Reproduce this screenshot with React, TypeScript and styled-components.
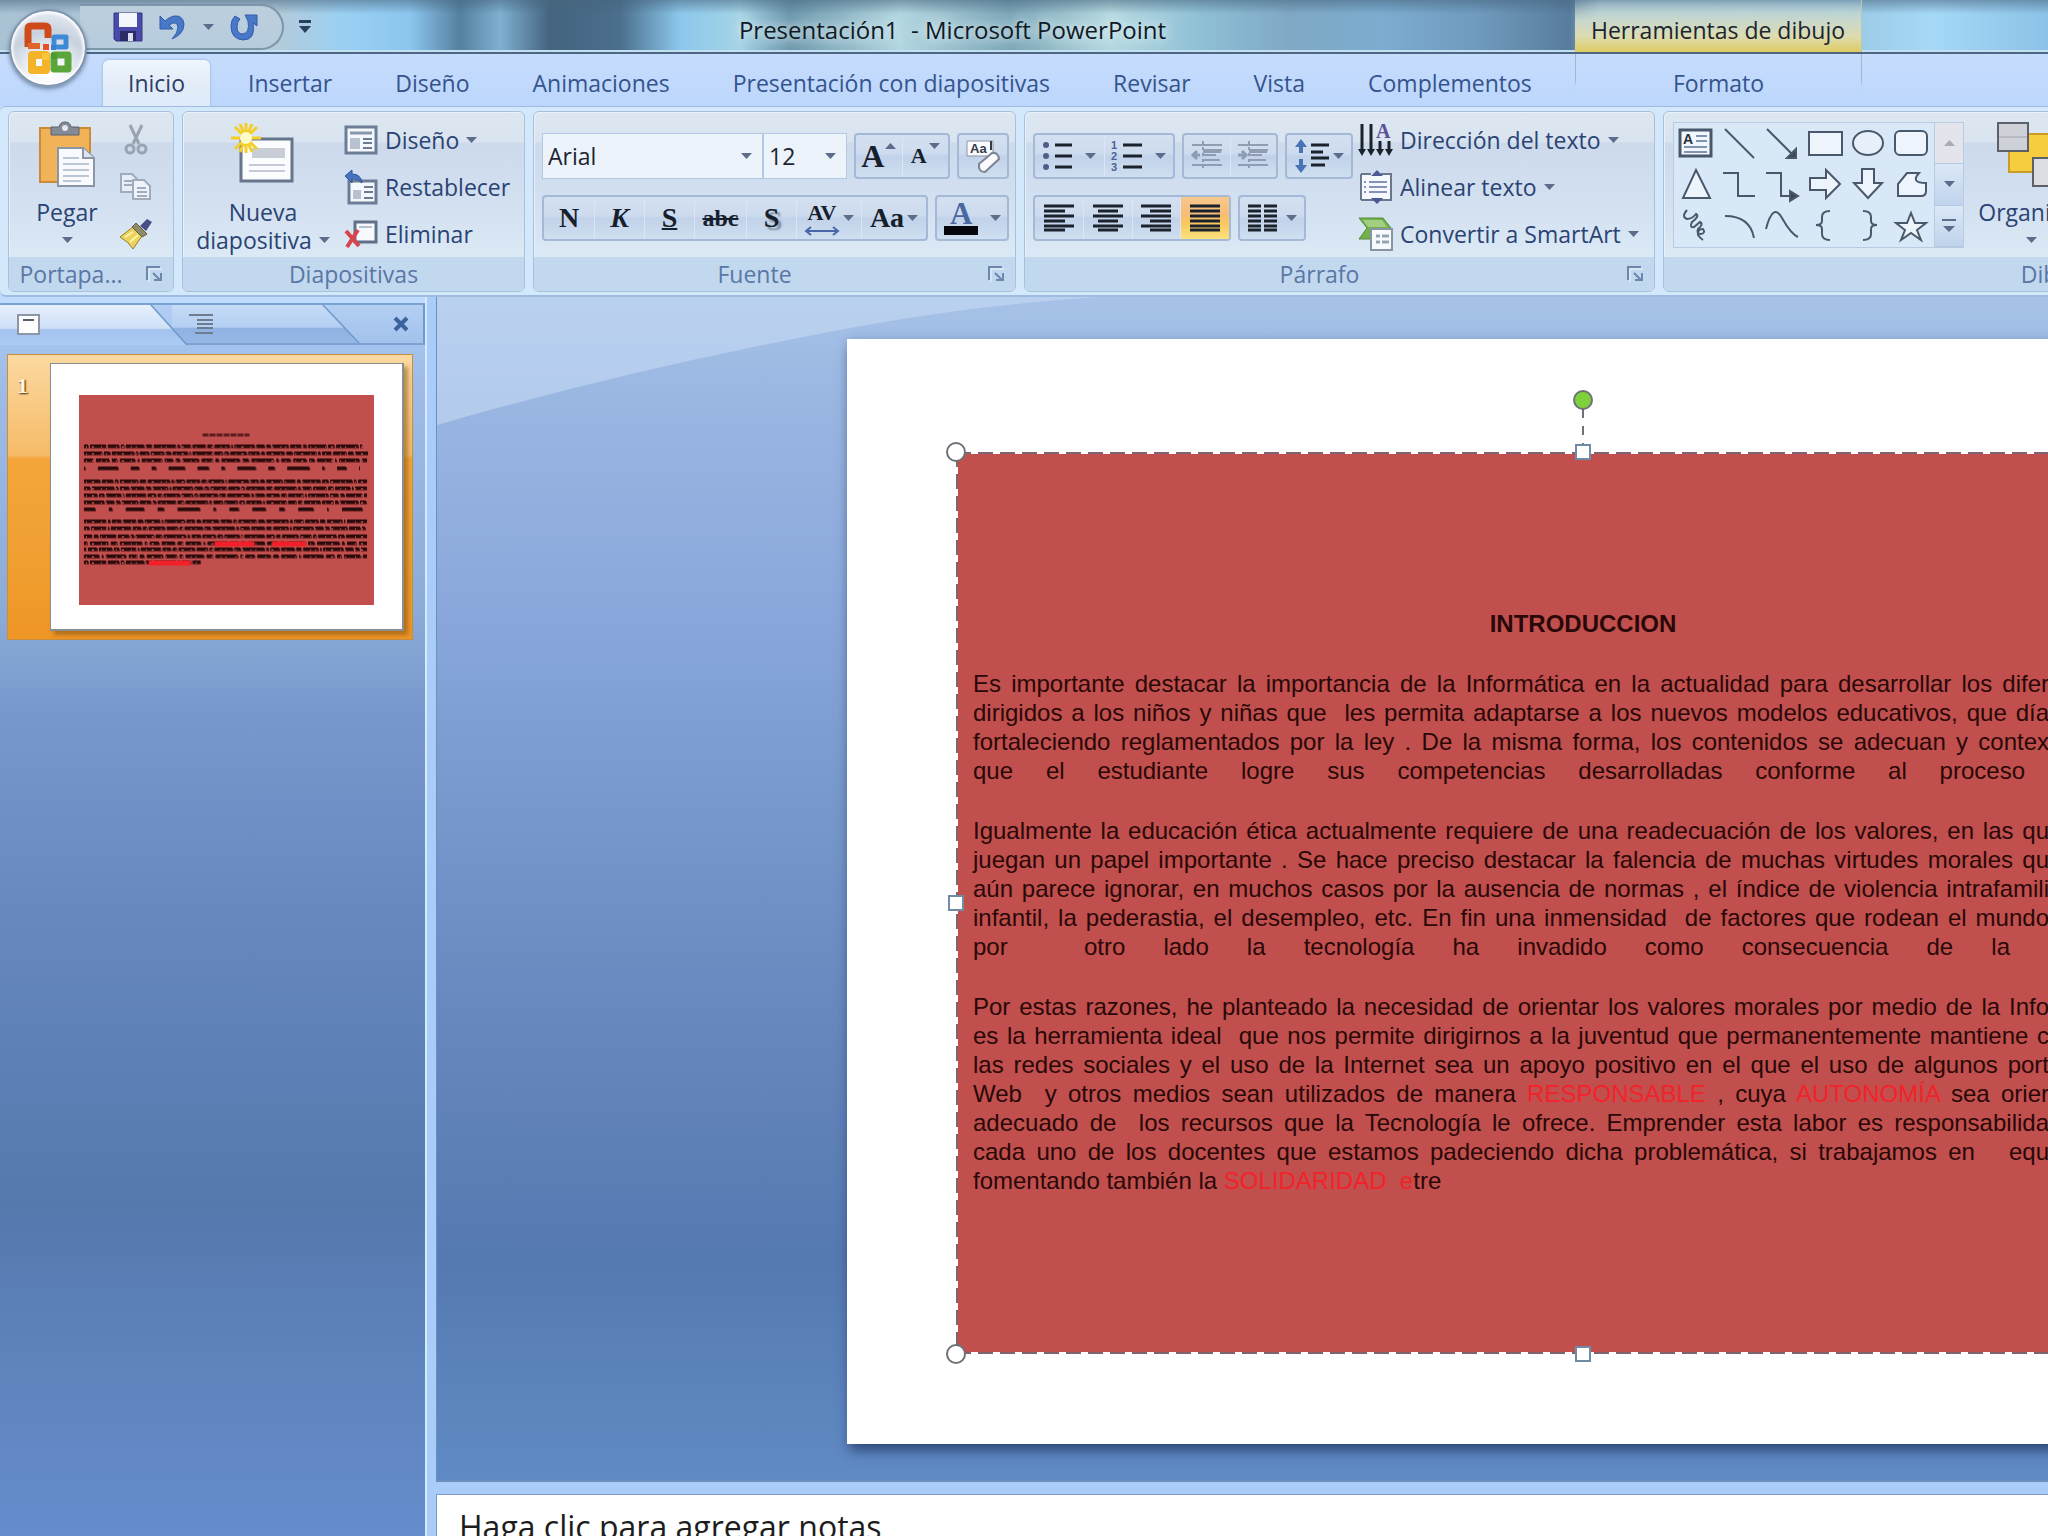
import React from 'react';
import styled, { createGlobalStyle, css } from 'styled-components';

const ui = `"Open Sans", "Noto Sans", sans-serif`;
const arial = `"Liberation Sans", Arial, sans-serif`;
const serif = `"Liberation Serif", "Times New Roman", serif`;

const GlobalStyle = createGlobalStyle`
  *, *::before, *::after { box-sizing: border-box; }
  html, body { margin: 0; height: 100%; overflow: hidden; }
  #root { height: 100%; }
  button, select, textarea { font: inherit; color: inherit; margin: 0; padding: 0; border: 0; background: none; }
  svg { display: block; flex: none; overflow: visible; }
`;

const Window = styled.div`
  position: relative;
  display: flex;
  flex-direction: column;
  height: 100vh;
  overflow: hidden;
  background: #bfdbff;
  font-family: ${ui};
  font-size: 23px;
  line-height: 28px;
  color: #2b4373;
`;

/* ---------- title bar ---------- */

const TitleBar = styled.header`
  display: flex;
  flex: none;
  height: 54px;
  border-bottom: 2px solid #4c6683;
  box-shadow: inset 0 -2px 0 #c3dff2;
  background:
    linear-gradient(180deg, rgba(70, 100, 125, 0.55) 0, rgba(120, 160, 190, 0) 14px),
    linear-gradient(90deg, #a9c3d4 0, #b3cbdb 280px, #9bd0f2 340px, #8cc6ee 410px, #55809f 460px, #7fb0d2 500px,
      #44647f 550px, #4b6f8c 620px, #8cc8ec 680px, #a4d3e6 740px, #6c97ac 790px, #b3d7e1 900px, #7ba5b7 1010px,
      #b5d9e0 1110px, #8fc0d6 1200px, #7fa8c4 1290px, #7cacd0 1380px, #6f9abd 1480px, #587c9e 1570px, #a3c8dc 1600px,
      #9ccbe6 1860px, #a6d9f8 1930px, #8cc2e6 100%);
`;

const QuickAccess = styled.div`
  display: flex;
  flex: none;
  align-items: center;
  width: 330px;
  padding: 4px 0 2px 80px;
`;

const QuickPill = styled.div`
  display: flex;
  align-items: center;
  gap: 16px;
  width: 204px;
  height: 46px;
  padding-left: 33px;
  border: 2px solid #7e95ab;
  border-left: 0;
  border-radius: 0 24px 24px 0;
  background: linear-gradient(#bdcfdd, #b6ccdd);
`;

const IconButton = styled.button<{ $w?: number; $h?: number }>`
  display: flex;
  align-items: center;
  justify-content: center;
  width: ${(p) => (p.$w ? `${p.$w}px` : 'auto')};
  height: ${(p) => (p.$h ? `${p.$h}px` : 'auto')};
`;

const QuickMenu = styled(IconButton)`
  margin-left: 14px;
`;

const DocTitle = styled.h1`
  flex: 1;
  margin: 0;
  padding-top: 16px;
  text-align: center;
  font-size: 24px;
  font-weight: 400;
  line-height: 28px;
  color: #101a26;
  text-shadow: 0 0 10px #e6f3f6, 0 0 16px #d6ebf2;
`;

const ContextTitle = styled.div`
  flex: none;
  width: 287px;
  margin-right: 186px;
  padding-top: 16px;
  text-align: center;
  color: #1c2430;
  border-right: 1px solid #b9c7b8;
  background: linear-gradient(rgba(190, 215, 225, 0.2) 0, #c9d8cc 40%, #dcdcb0 70%, #dfcb62 100%);
`;

const OfficeButton = styled.button`
  position: absolute;
  left: 9px;
  top: 9px;
  display: flex;
  align-items: center;
  justify-content: center;
  width: 78px;
  height: 78px;
  border: 2px solid #8195ae;
  border-radius: 50%;
  background: radial-gradient(circle at 50% 85%, #ffffff 0, #f3f6fa 25%, #c8d1dd 58%, #e9eef5 90%);
  box-shadow: 0 2px 4px rgba(50, 70, 100, 0.6), inset 0 0 3px 2px #ffffff;
`;

/* ---------- tabs ---------- */

const TabRow = styled.nav`
  display: flex;
  flex: none;
  height: 52px;
  padding-left: 103px;
  background: linear-gradient(#c6dcfc, #bcd7fd);
`;

const Tab = styled.button<{ $active?: boolean }>`
  flex: none;
  height: 46px;
  margin: 6px 13px 0 0;
  padding: 0 25px;
  border-radius: 6px 6px 0 0;
  line-height: 46px;
  color: #35548c;
  white-space: nowrap;
  &:only-child { margin-right: 0; }
  ${(p) =>
    p.$active &&
    css`
      color: #2c3f66;
      background: linear-gradient(#eef5fd, #e3edf8 50%, #dfeafa);
      box-shadow: 0 0 2px 1px #a6c4ea;
    `}
`;

const ContextTabs = styled.div`
  display: flex;
  flex: none;
  justify-content: center;
  width: 287px;
  margin: 0 186px 0 auto;
  border: solid transparent;
  border-width: 0 1px;
  background: linear-gradient(#c6dcfc, #bcd7fd) padding-box, linear-gradient(#9fb6cc 50%, #bcd7fd 60%) border-box;
`;

/* ---------- ribbon ---------- */

const Ribbon = styled.section`
  display: flex;
  flex: none;
  gap: 8px;
  height: 191px;
  padding: 4px 0 3px 8px;
  border: 1px solid #9dbce0;
  border-width: 1px 0 2px;
  border-radius: 6px 0 0 6px;
  background: #d3e8fa;
  overflow: hidden;
`;

const Group = styled.section<{ $w: number }>`
  display: flex;
  flex: none;
  flex-direction: column;
  width: ${(p) => p.$w}px;
  border: 1px solid #a8c0dc;
  border-radius: 6px;
  overflow: hidden;
  background: linear-gradient(#dde7f1 0, #d9e4f0 30px, #ccdaec 31px, #d3e1f1 100px, #dceaf6 146px);
  box-shadow: inset 1px 1px 0 #e9f2fa;
`;

const GroupBody = styled.div<{ $pad?: string; $gap?: number }>`
  display: flex;
  flex: 1;
  min-height: 0;
  gap: ${(p) => p.$gap ?? 0}px;
  padding: ${(p) => p.$pad ?? '0'};
`;

const Caption = styled.footer`
  display: flex;
  flex: none;
  align-items: center;
  height: 34px;
  padding: 0 9px;
  background: #c1d8ef;
  color: #5a77a5;
`;

const CaptionText = styled.span<{ $launcher?: boolean }>`
  flex: 1;
  padding-right: ${(p) => (p.$launcher ? 22 : 0)}px;
  text-align: center;
  white-space: nowrap;
`;

const BigButton = styled.button<{ $w: number }>`
  display: flex;
  flex: none;
  flex-direction: column;
  align-items: center;
  width: ${(p) => p.$w}px;
  height: 138px;
  white-space: nowrap;
`;

const BigIcon = styled.span`
  height: 82px;
  padding-top: 6px;
`;

const BigLabel = styled.span`
  display: flex;
  align-items: center;
  gap: 7px;
  height: 28px;
`;

const Stack = styled.div`
  display: flex;
  flex: none;
  flex-direction: column;
`;

const SmallButton = styled.button`
  display: flex;
  align-items: center;
  gap: 7px;
  height: 47px;
  white-space: nowrap;
`;

const Rows = styled.div`
  display: flex;
  flex: none;
  flex-direction: column;
  gap: 16px;
  padding-top: 21px;
`;

const Row = styled.div<{ $tight?: boolean }>`
  display: flex;
  gap: ${(p) => (p.$tight ? 0 : 7)}px;
  height: 46px;
`;

const ButtonSet = styled.div<{ $w: number }>`
  display: flex;
  flex: none;
  width: ${(p) => p.$w}px;
  border: 2px solid #a3b9d6;
  border-radius: 4px;
  background: linear-gradient(#d3e0f1 0, #cddbee 45%, #c1d2e9 50%, #cfdff1 100%);
`;

const SetButton = styled.button<{ $active?: boolean; $gap?: number; $w?: number }>`
  display: flex;
  flex: ${(p) => (p.$w ? `0 0 ${p.$w}px` : '1 1 0')};
  align-items: center;
  justify-content: center;
  gap: ${(p) => p.$gap ?? 8}px;
  border-left: 1px solid #dbe6f4;
  &:first-child { border-left: 0; }
  ${(p) => p.$active && css`background: linear-gradient(#f8c88c, #f7bd78 40%, #fbc55c 60%, #fde27e);`}
`;

const Glyph = styled.span<{ $italic?: boolean; $line?: string; $shadow?: boolean; $size?: number }>`
  font-family: ${serif};
  font-weight: 700;
  font-size: ${(p) => p.$size ?? 28}px;
  line-height: ${(p) => ((p.$size ?? 28) > 30 ? 38 : (p.$size ?? 28) > 24 ? 32 : 26)}px;
  color: #16202c;
  font-style: ${(p) => (p.$italic ? 'italic' : 'normal')};
  text-decoration: ${(p) => p.$line ?? 'none'};
  text-decoration-thickness: 2px;
  text-shadow: ${(p) => (p.$shadow ? '3px 3px 2px #7a8797' : 'none')};
`;

const Superscript = styled.span`
  align-self: flex-start;
  padding-top: 8px;
`;

const Combo = styled.label<{ $w: number }>`
  display: flex;
  flex: none;
  align-items: center;
  width: ${(p) => p.$w}px;
  padding-right: 10px;
  border: 1px solid #b3c8e2;
  background: #ecf3fb;
`;

const ComboSelect = styled.select`
  flex: 1;
  min-width: 0;
  height: 100%;
  padding-left: 5px;
  appearance: none;
  color: #1c2530;
`;

const Gallery = styled.div`
  display: flex;
  flex: none;
  width: 291px;
  height: 126px;
  margin-top: 6px;
  border: 1px solid #b7cbe2;
  background: #d8e8f7;
`;

const ShapeGrid = styled.div`
  display: grid;
  flex: 1;
  grid-template-columns: repeat(6, 1fr);
  grid-template-rows: repeat(3, 1fr);
`;

const Scroller = styled.div`
  display: grid;
  grid-template-rows: repeat(3, 1fr);
  width: 29px;
  border-left: 1px solid #b7cbe2;
`;

const ScrollButton = styled.button<{ $off?: boolean }>`
  display: flex;
  align-items: center;
  justify-content: center;
  border-bottom: 1px solid #b3c8e2;
  background: ${(p) => (p.$off ? '#e4e4ec' : 'linear-gradient(#dbe8f7, #c0d3ec)')};
`;

/* ---------- work area ---------- */

const backdrop = `linear-gradient(#a6c2e8 0, #9ab7e2 100px, #88a6da 330px, #7799cc 500px, #6788be 720px, #5579b1 960px, #5f89c2 1160px, #648ccc 1240px)`;

const Work = styled.main`
  display: flex;
  flex: 1;
  min-height: 0;
  padding-top: 6px;
`;

const SidePane = styled.aside`
  display: flex;
  flex: none;
  flex-direction: column;
  width: 425px;
  background: linear-gradient(#a9c9f3 0, #9dbbe6 90px, #8cadd8 300px, #7898cd 410px, #6789bf 600px, #5578ad 900px, #5f85bf 1080px, #658dcc 1240px);
`;

const PaneTabs = styled.div`
  display: flex;
  flex: none;
  height: 42px;
  background: linear-gradient(#b3cff3, #a3c2ec);
  border-top: 2px solid #7ca2d3;
  border-right: 2px solid #7397cb;
  border-bottom: 2px solid #7ca2d3;
`;

const PaneTab = styled.button<{ $w: number; $front?: boolean }>`
  position: relative;
  flex: none;
  width: ${(p) => p.$w}px;
  margin-right: ${(p) => (p.$front ? -16 : 0)}px;
  margin-bottom: ${(p) => (p.$front ? -2 : 0)}px;
  padding-left: 17px;
  z-index: ${(p) => (p.$front ? 1 : 0)};
  clip-path: polygon(0 0, calc(100% - 36px) 0, 100% 100%, 0 100%);
  background: #6f97cb;
  &::before {
    content: '';
    position: absolute;
    inset: 0 2px 0 0;
    clip-path: polygon(0 0, calc(100% - 36px) 0, 100% 100%, 0 100%);
    background: ${(p) =>
      p.$front
        ? 'linear-gradient(#e6f0fc, #cfe0f7 58%, #a3c2ee 62%, #acccf6)'
        : 'linear-gradient(#c6dbf6, #b4cff2 58%, #8fb2e3 62%, #96b8e6)'};
  }
  & > svg { position: relative; }
`;

const PaneClose = styled.button`
  display: flex;
  align-items: center;
  margin-left: auto;
  padding-right: 14px;
`;

const ThumbList = styled.ol`
  margin: 0;
  padding: 9px 12px 0 7px;
  list-style: none;
`;

const Thumb = styled.li`
  display: flex;
  height: 286px;
  padding: 8px 8px 8px 0;
  border: 1px solid #c98f3c;
  background: linear-gradient(#fbd9a0 0, #f6bb68 100px, #f5a63a 104px, #f0a032 200px, #ee9526 100%);
`;

const ThumbNumber = styled.span`
  width: 42px;
  padding: 11px 0 0 9px;
  font: 700 22px/24px ${serif};
  color: #fff4dc;
  text-shadow: 1px 1px 2px #6a4a18, 1px 1px 1px #7a5a28;
`;

const ThumbSlide = styled.div`
  flex: 1;
  padding: 31px 28px 24px;
  border: 2px solid #8b8d93;
  border-width: 1px 2px 2px 1px;
  background: #ffffff;
  box-shadow: 4px 4px 4px rgba(120, 75, 10, 0.5);
`;

const ThumbShape = styled.div`
  height: 100%;
  background: #c04f4d;
`;

const Editor = styled.div`
  display: flex;
  flex: 1;
  flex-direction: column;
  min-width: 0;
  padding-left: 9px;
  margin-top: -6px;
  border-left: 2px solid #d4ebff;
  background: #a9ccf8;
`;

const Canvas = styled.section`
  position: relative;
  flex: 1;
  min-height: 0;
  padding: 42px 0 36px 410px;
  border-left: 1px solid #6a8fc6;
  border-bottom: 2px solid #6b90ba;
  overflow: hidden;
  background: ${backdrop};
`;

const Swoosh = styled.svg`
  position: absolute;
  left: 0;
  top: 0;
`;

const Slide = styled.article`
  position: relative;
  width: 1472px;
  height: 100%;
  padding: 113px 109px 90px;
  background: #ffffff;
  box-shadow: 3px 6px 12px rgba(25, 45, 90, 0.75);
`;

const dashX = 'repeating-linear-gradient(90deg, #80636f 0 15px, #ffffff 15px 22px)';
const dashY = 'repeating-linear-gradient(#80636f 0 15px, #ffffff 15px 22px)';

const TextShape = styled.div`
  position: relative;
  height: 100%;
  padding: 157px 17px 0;
  background:
    ${dashX} 0 0 / 100% 2px no-repeat,
    ${dashX} 0 100% / 100% 2px no-repeat,
    ${dashY} 0 0 / 2px 100% no-repeat,
    ${dashY} 100% 0 / 2px 100% no-repeat,
    #c04f4d;
  font-family: ${arial};
  font-size: 24px;
  line-height: 29px;
  color: #2a0808;
`;

const ShapeTitle = styled.h2`
  margin: 0 0 31px;
  text-align: center;
  font-size: 24px;
  line-height: 29px;
  font-weight: 700;
`;

const Paragraph = styled.p`
  width: 1076px;
  margin: 0 0 31px;
`;

const Line = styled.span<{ $inset?: number; $last?: boolean }>`
  display: block;
  margin-right: ${(p) => p.$inset ?? 0}px;
  white-space: nowrap;
  text-align: justify;
  text-align-last: ${(p) => (p.$last ? 'left' : 'justify')};
`;

const Red = styled.span`
  color: #f3222a;
`;

const Handle = styled.i<{ $x: string; $y: string; $round?: boolean; $green?: boolean }>`
  position: absolute;
  left: ${(p) => p.$x};
  top: ${(p) => p.$y};
  width: ${(p) => (p.$round ? 20 : 16)}px;
  height: ${(p) => (p.$round ? 20 : 16)}px;
  transform: translate(-50%, -50%);
  border: 2px solid ${(p) => (p.$round ? '#6d7278' : '#6f8ba6')};
  border-radius: ${(p) => (p.$round ? '50%' : '0')};
  background: ${(p) => (p.$green ? '#7fd13b' : '#ffffff')};
`;

const Stem = styled.i`
  position: absolute;
  left: calc(50% - 1px);
  top: -43px;
  width: 2px;
  height: 36px;
  background: repeating-linear-gradient(#6d7278 0 9px, #ffffff 9px 17px);
`;

const Notes = styled.textarea`
  flex: none;
  height: 42px;
  margin-top: 12px;
  padding: 10px 22px 0;
  border: solid #7c9cc8 !important;
  border-width: 1px 0 0 1px !important;
  background: #ffffff !important;
  font: 32px/44px ${ui} !important;
  color: #1d1d1d;
  resize: none;
  overflow: hidden;
  outline: 0;
  &::placeholder { color: #1d1d1d; opacity: 1; }
`;

/* ---------- icons ---------- */

const Caret = ({ up, dim }: { up?: boolean; dim?: boolean }) => (
  <svg width="11" height="6" viewBox="0 0 11 6">
    <path d={up ? 'M0 6h11L5.500 0z' : 'M0 0h11L5.500 6z'} fill={dim ? '#a5abb8' : '#5c6c8a'} />
  </svg>
);

const Launcher = () => (
  <IconButton aria-label="Más opciones">
    <svg width="18" height="18" viewBox="0 0 18 18" fill="none" stroke="#6d87ad" strokeWidth="2">
      <path d="M1 15V2h13" />
      <path d="M3 17V4h13" stroke="#eef5fc" strokeWidth="1" />
      <path d="M7 8l7 7M15 8v7H8" />
    </svg>
  </IconButton>
);

const OfficeLogo = () => (
  <svg width="50" height="52" viewBox="0 0 50 52" fill="none" strokeLinejoin="round">
    <path d="M5 25V7q0-3 3-3h14q3 0 3 3v9" stroke="#cf4a1a" strokeWidth="7" />
    <path d="M5 24h12" stroke="#e0662a" strokeWidth="6" />
    <path d="M31 15h12v10H31z" stroke="#3f8ad8" strokeWidth="5" />
    <path d="M9 33h14v15H9z" stroke="#f5b32a" strokeWidth="8" />
    <path d="M31 33h14v14H31z" stroke="#5aa63a" strokeWidth="7" />
    <path d="M20 22h6v6h-6z" fill="#e8502a" />
    <path d="M28 23h5v5h-5z" fill="#3a7fd0" />
    <path d="M19 31h7v7h-7z" fill="#f8c63a" />
    <path d="M28 31h6v6h-6z" fill="#4b9a34" />
  </svg>
);

const SaveIcon = () => (
  <svg width="30" height="30" viewBox="0 0 30 30">
    <path d="M1 1h28v28H3l-2-2z" fill="#4b4aa8" stroke="#34348a" />
    <path d="M6 1h18v14H6z" fill="#f2f6ff" />
    <path d="M7 19h16v10H7z" fill="#2b2b66" />
    <path d="M15 21h5v8h-5z" fill="#d9def2" />
  </svg>
);

const UndoIcon = () => (
  <svg width="28" height="28" viewBox="0 0 28 28">
    <path d="M1 3v13h13l-4-4q8-5 9 2 0 6-6 12 12-5 12-15Q24 2 15 3 10 4 6 8z" fill="#4a78c8" stroke="#2f5cab" />
  </svg>
);

const RedoIcon = () => (
  <svg width="28" height="28" viewBox="0 0 28 28">
    <path d="M15 2h12v11l-4-3q3 17-10 17Q1 26 1 13q0-6 4-10l5 3q-3 3-3 8 0 7 6 7 7-1 5-13z" fill="#4a78c8" stroke="#2f5cab" />
  </svg>
);

const PasteIcon = () => (
  <svg width="58" height="66" viewBox="0 0 58 66">
    <path d="M2 6h50v54H2z" fill="#f0b357" stroke="#c98a3a" strokeWidth="2" />
    <path d="M13 5h8q1-5 6-5t6 5h8v8H13z" fill="#848b96" stroke="#596170" />
    <circle cx="27" cy="6" r="3" fill="#e3e8ee" />
    <path d="M20 26h25l11 10v28H20z" fill="#f8fafd" stroke="#8b95a5" strokeWidth="2" />
    <path d="M45 26v10h11" fill="#dde4ee" stroke="#8b95a5" strokeWidth="2" />
    <path d="M25 36h16M25 42h26M25 48h26M25 54h26M25 59h18" stroke="#bcc7d6" strokeWidth="2" />
  </svg>
);

const CutIcon = () => (
  <svg width="24" height="32" viewBox="0 0 24 32" fill="none" stroke="#9aa3b2" strokeWidth="3">
    <path d="M6 1l9 19M18 1L9 20" />
    <circle cx="6" cy="25" r="4" />
    <circle cx="18" cy="25" r="4" />
  </svg>
);

const CopyIcon = () => (
  <svg width="32" height="28" viewBox="0 0 32 28" stroke="#a0abbc" strokeWidth="2">
    <path d="M1 1h11l5 5v13H1z" fill="#e8eef6" />
    <path d="M4 8h9M4 12h9" />
    <path d="M13 7h11l6 6v13H13z" fill="#eef3f9" />
    <path d="M17 15h9M17 19h10M17 23h10" />
  </svg>
);

const BrushIcon = () => (
  <svg width="34" height="32" viewBox="0 0 34 32">
    <path d="M1 19L14 9l9 9-9 13q-4-7-13-12z" fill="#ecd35c" stroke="#9a7c2a" />
    <path d="M6 19l8-5M11 24l8-7" stroke="#fff3a8" strokeWidth="2" />
    <path d="M13 9l4-4 11 11-5 3z" fill="#8f8a68" stroke="#5f5c48" />
    <path d="M21 8l7-7 5 3-6 9z" fill="#4a4d86" />
  </svg>
);

const NewSlideIcon = () => (
  <svg width="66" height="62" viewBox="0 0 66 62">
    <path d="M11 17h51v42H11z" fill="#fbfcfe" stroke="#66758c" strokeWidth="3" />
    <path d="M22 26h33v10H22z" fill="#c9cdd6" />
    <path d="M19 43h36M19 49h36" stroke="#c4cbd8" strokeWidth="2" />
    <path d="M16 1v30M1 16h30M5 5l22 22M27 5L5 27M10 2l12 28M22 2L10 30" stroke="#f3cf28" strokeWidth="3" />
    <circle cx="16" cy="16" r="6" fill="#fffbc8" />
  </svg>
);

const LayoutIcon = () => (
  <svg width="34" height="30" viewBox="0 0 34 30">
    <path d="M2 2h30v26H2z" fill="#f4f8fc" stroke="#6b7c96" strokeWidth="3" />
    <path d="M6 8h22" stroke="#8896ac" strokeWidth="3" />
    <path d="M6 13h10v11H6z" fill="#b7c1d0" />
    <path d="M19 14h9M19 18h9M19 23h9" stroke="#6b7c96" strokeWidth="2" />
  </svg>
);

const ResetIcon = () => (
  <svg width="34" height="36" viewBox="0 0 34 36">
    <path d="M5 12h27v22H5z" fill="#f4f8fc" stroke="#6b7c96" strokeWidth="3" />
    <path d="M9 21h8v9H9z" fill="#b7c1d0" />
    <path d="M20 18h9M20 23h9M20 29h9" stroke="#6b7c96" strokeWidth="2" />
    <path d="M1 7l7-6v4q9 0 10 9-4-5-10-4v4z" fill="#4673bb" stroke="#2c569d" />
  </svg>
);

const DeleteIcon = () => (
  <svg width="34" height="30" viewBox="0 0 34 30">
    <path d="M11 3h21v20H11z" fill="#f7fafd" stroke="#5f7088" strokeWidth="3" />
    <path d="M15 8h13" stroke="#b5bfce" strokeWidth="2" />
    <path d="M2 12l13 15M14 11L3 28" stroke="#d8434c" strokeWidth="4" />
  </svg>
);

const ClearIcon = () => (
  <svg width="36" height="36" viewBox="0 0 36 36">
    <path d="M2 3h26v15H2z" fill="#fafcfe" stroke="#8a94a4" />
    <text x="5" y="15" fontFamily="Liberation Sans" fontWeight="700" fontSize="13" fill="#333c48">Aa</text>
    <path d="M26 3v9" stroke="#333c48" strokeWidth="2" />
    <path d="M14 26l13-11q6-1 7 6L20 34q-7 0-6-8z" fill="#fbfbfd" stroke="#7b8594" strokeWidth="2" />
  </svg>
);

const SpacingArrow = () => (
  <svg width="36" height="10" viewBox="0 0 36 10" fill="none" stroke="#4867a8" strokeWidth="2">
    <path d="M2 5h32M7 1L2 5l5 4M29 1l5 4-5 4" />
  </svg>
);

const LineIcon = ({ rows, width = 30 }: { rows: number[][]; width?: number }) => (
  <svg width={width} height="26" viewBox={`0 0 ${width} 26`} stroke="#1b222c" strokeWidth="3">
    {rows.map(([x1, x2, y], i) => (
      <path key={i} d={`M${x1} ${y}H${x2}`} />
    ))}
  </svg>
);

const alignYs = [1, 6, 11, 16, 21, 25];
const leftRows = alignYs.map((y, i) => [0, i % 2 ? 21 : 30, y]);
const centerRows = alignYs.map((y, i) => [i % 2 ? 5 : 0, i % 2 ? 25 : 30, y]);
const rightRows = alignYs.map((y, i) => [i % 2 ? 9 : 0, 30, y]);
const justifyRows = alignYs.map((y) => [0, 30, y]);
const columnRows = alignYs.flatMap((y) => [[0, 13, y], [16, 29, y]]);

const BulletsIcon = () => (
  <svg width="30" height="28" viewBox="0 0 30 28">
    {[3, 14, 25].map((y) => (
      <g key={y}>
        <circle cx="3" cy={y} r="3" fill="#4d5f88" />
        <path d={`M12 ${y}h17`} stroke="#1b222c" strokeWidth="3" />
      </g>
    ))}
  </svg>
);

const NumbersIcon = () => (
  <svg width="32" height="34" viewBox="0 0 32 34">
    {[6, 17, 28].map((y, i) => (
      <g key={y}>
        <text x="0" y={y + 4} fontFamily="Liberation Sans" fontWeight="700" fontSize="11" fill="#4d5f98">{i + 1}</text>
        <path d={`M12 ${y}h19`} stroke="#1b222c" strokeWidth="3" />
      </g>
    ))}
  </svg>
);

const IndentIcon = ({ right }: { right?: boolean }) => (
  <svg width="32" height="32" viewBox="0 0 32 32" stroke="#8f9cb2" strokeWidth="2" fill="none">
    <path d="M1 5h30M12 10h19M12 15h13M12 20h17M1 25h30" />
    <path d="M12 9h18v4H12z" fill="#8f9cb2" stroke="none" />
    <path d="M12 1v30" strokeDasharray="3 3" />
    <path d={right ? 'M1 15h7M5 11l4 4-4 4' : 'M9 15H2M6 11l-4 4 4 4'} strokeWidth="3" />
  </svg>
);

const LineSpacingIcon = () => (
  <svg width="34" height="34" viewBox="0 0 34 34">
    <path d="M6 0l6 8H8v6H4V8H0zM6 34l6-8H8v-6H4v6H0z" fill="#4a73b5" />
    <path d="M16 6h18M16 13h12M16 19h18M16 26h14" stroke="#1b222c" strokeWidth="3" />
  </svg>
);

const DirectionIcon = () => (
  <svg width="34" height="34" viewBox="0 0 34 34">
    <path d="M3 1v26M12 1v26M21 18v10M30 18v10" stroke="#1b222c" strokeWidth="3" />
    <path d="M-1 26h8l-4 7zM8 26h8l-4 7zM17 26h8l-4 7zM26 26h8l-4 7z" fill="#1b222c" />
    <text x="17" y="15" fontFamily="Liberation Serif" fontWeight="700" fontSize="20" fill="#5a4f96">A</text>
  </svg>
);

const AlignTextIcon = () => (
  <svg width="34" height="34" viewBox="0 0 34 34">
    <path d="M2 4h30v26H2z" fill="#f5f8fc" />
    <path d="M2 4v26M32 3v28M2 30h30M2 4h10M22 4h10" stroke="#68768e" strokeWidth="2" fill="none" />
    <path d="M10 12h18M10 17h18M10 22h18" stroke="#8692b8" strokeWidth="2" />
    <path d="M5 12h2M5 17h2M5 22h2" stroke="#8692b8" strokeWidth="2" />
    <path d="M18 0l6 6H12zM18 34l6-6H12z" fill="#4c5a94" />
  </svg>
);

const SmartArtIcon = () => (
  <svg width="34" height="34" viewBox="0 0 34 34">
    <path d="M0 1h24l8 10-8 11H0l8-11z" fill="#74b04c" stroke="#578c38" />
    <path d="M4 3h19l5 7H9z" fill="#a3cf83" />
    <path d="M12 12h21v21H12z" fill="#f7fafc" stroke="#8893a4" strokeWidth="2" />
    <path d="M17 19h4M23 19h7M17 25h4M23 25h7" stroke="#97a3b5" strokeWidth="3" />
  </svg>
);

const ArrangeIcon = () => (
  <svg width="68" height="66" viewBox="0 0 68 66" strokeWidth="2">
    <path d="M12 12h42v38H12z" fill="#f5cd3e" stroke="#c99c2a" />
    <path d="M1 1h30v28H1z" fill="#cfd1d8" stroke="#5c6069" />
    <path d="M2 15h28" stroke="#b7bac4" />
    <path d="M36 36h30v28H36z" fill="#dcdde2" stroke="#5c6069" />
  </svg>
);

const shapePaths: { name: string; node: React.ReactNode }[] = [
  {
    name: 'Cuadro de texto',
    node: (
      <>
        <path d="M1 3h31v26H1z" fill="#f2f7fc" strokeWidth="3" />
        <text x="4" y="17" fontFamily="Liberation Sans" fontWeight="700" fontSize="14" fill="#26313f" stroke="none">A</text>
        <path d="M17 9h11M17 14h11M5 20h23M5 25h23" stroke="#8294b5" />
      </>
    ),
  },
  { name: 'Línea', node: <path d="M3 2l29 29" /> },
  { name: 'Flecha', node: <path d="M2 2l26 26M31 22v9h-9z" fill="#3a4658" /> },
  { name: 'Rectángulo', node: <path d="M0 5h33v23H0z" fill="#edf4fb" /> },
  { name: 'Elipse', node: <ellipse cx="16" cy="16" rx="15" ry="12" fill="#e6effa" /> },
  { name: 'Rectángulo redondeado', node: <rect x="0" y="4" width="32" height="24" rx="5" fill="#edf4fb" /> },
  { name: 'Triángulo', node: <path d="M17 2l14 28H4z" fill="#edf4fb" /> },
  { name: 'Conector angular', node: <path d="M1 5h15v23h17" /> },
  {
    name: 'Conector angular de flecha',
    node: (
      <>
        <path d="M1 5h15v23h10" />
        <path d="M25 23l8 5-8 5z" fill="#3a4658" />
      </>
    ),
  },
  { name: 'Flecha derecha', node: <path d="M1 10h16V2l14 14-14 14v-8H1z" fill="#edf4fb" /> },
  { name: 'Flecha abajo', node: <path d="M10 1h12v14h8L16 30 2 15h8z" fill="#edf4fb" /> },
  { name: 'Forma libre', node: <path d="M3 28V16L12 5h12q-9 10 7 10v8q0 5-5 5z" fill="#edf4fb" /> },
  { name: 'A mano alzada', node: <path d="M8 1q-6 7 0 9 5 0 9-5 4 2-4 8-3 6 2 5l6-5q4 2-2 7-2 5 3 5 5-1 2-5-6 0-5 6 2 3 5 5" /> },
  { name: 'Arco', node: <path d="M3 7q25 0 29 22" /> },
  { name: 'Curva', node: <path d="M1 20Q8-7 17 9t16 19" /> },
  { name: 'Llave de apertura', node: <path d="M21 2q-8 0-8 6v4q0 4-6 4 6 0 6 4v5q0 6 8 6" /> },
  { name: 'Llave de cierre', node: <path d="M11 2q8 0 8 6v4q0 4 6 4-6 0-6 4v5q0 6-8 6" /> },
  { name: 'Estrella', node: <path d="M16 4l4 10h11l-9 7 4 10-10-7-10 7 4-10-9-7h11z" fill="#edf4fb" /> },
];

/* Greeked copy of the slide text: [y, x-end, word spacing] */
const greek: number[][] = [
  [52, 285, 1], [59, 290, 1], [66, 289, 2], [74, 282, 12],
  [87, 289, 1], [94, 289, 1], [101, 289, 1], [108, 289, 1], [115, 286, 13],
  [127, 289, 1], [134, 289, 1], [142, 289, 1], [149, 289, 2], [155, 289, 1], [162, 289, 2], [168, 122, 1],
];
const words = [5, 17, 12, 4, 19, 7, 23, 3, 10, 14, 6, 16, 2, 21, 9];

const ThumbText = () => (
  <svg width="100%" height="100%" viewBox="0 0 296 210" preserveAspectRatio="none" fill="none">
    <path d="M124 40H171" stroke="#5a1c1c" strokeWidth="3" strokeDasharray="6 1" />
    {greek.map(([y, x, gap], row) => {
      const order = words.map((_, i) => words[(i + row * 4) % words.length]);
      return (
        <g key={y}>
          <path d={`M5 ${y}H${x}`} stroke="#5b1e1e" strokeWidth="3" strokeDasharray={order.map((w) => `${w} ${gap}`).join(' ')} />
          <path d={`M5 ${y - 1}H${x}`} stroke="#2a0a0a" strokeWidth="3" strokeDasharray={order.map((w) => `${w - 1} ${gap + 1}`).join(' ')} />
          {gap < 3 && <path d={`M7 ${y}H${x}`} stroke="#a34242" strokeWidth="2" strokeDasharray="1 5 2 7 1 4 1 9" />}
        </g>
      );
    })}
    <path d="M136 149H176M194 149H228M70 168H112" stroke="#f3202a" strokeWidth="5" />
  </svg>
);

/* ---------- page ---------- */

const tabs = ['Inicio', 'Insertar', 'Diseño', 'Animaciones', 'Presentación con diapositivas', 'Revisar', 'Vista', 'Complementos'];

export default function App() {
  return (
    <Window>
      <GlobalStyle />
      <TitleBar>
        <QuickAccess>
          <QuickPill>
            <IconButton aria-label="Guardar"><SaveIcon /></IconButton>
            <IconButton aria-label="Deshacer"><UndoIcon /></IconButton>
            <IconButton aria-label="Opciones de deshacer"><Caret /></IconButton>
            <IconButton aria-label="Rehacer"><RedoIcon /></IconButton>
          </QuickPill>
          <QuickMenu aria-label="Personalizar barra">
            <svg width="14" height="14" viewBox="0 0 14 14" fill="#26405e"><path d="M1 0h12v3H1zM1 6h12l-6 7z" /></svg>
          </QuickMenu>
        </QuickAccess>
        <DocTitle>Presentación1&nbsp; - Microsoft PowerPoint</DocTitle>
        <ContextTitle>Herramientas de dibujo</ContextTitle>
      </TitleBar>

      <TabRow>
        {tabs.map((t, i) => (
          <Tab key={t} $active={i === 0}>{t}</Tab>
        ))}
        <ContextTabs><Tab>Formato</Tab></ContextTabs>
      </TabRow>
      <OfficeButton aria-label="Botón de Office"><OfficeLogo /></OfficeButton>

      <Ribbon>
        <Group $w={166}>
          <GroupBody $pad="4px 0 0 22px" $gap={15}>
            <BigButton $w={72}>
              <BigIcon><PasteIcon /></BigIcon>
              <BigLabel>Pegar</BigLabel>
              <BigLabel><Caret /></BigLabel>
            </BigButton>
            <Stack>
              <IconButton $w={36} $h={47} aria-label="Cortar"><CutIcon /></IconButton>
              <IconButton $w={36} $h={47} aria-label="Copiar"><CopyIcon /></IconButton>
              <IconButton $w={36} $h={47} aria-label="Copiar formato"><BrushIcon /></IconButton>
            </Stack>
          </GroupBody>
          <Caption><CaptionText $launcher>Portapa...</CaptionText><Launcher /></Caption>
        </Group>

        <Group $w={343}>
          <GroupBody $pad="4px 0 0 8px" $gap={9}>
            <BigButton $w={144}>
              <BigIcon><NewSlideIcon /></BigIcon>
              <BigLabel>Nueva</BigLabel>
              <BigLabel>diapositiva <Caret /></BigLabel>
            </BigButton>
            <Stack>
              <SmallButton><LayoutIcon />Diseño <Caret /></SmallButton>
              <SmallButton><ResetIcon />Restablecer</SmallButton>
              <SmallButton><DeleteIcon />Eliminar</SmallButton>
            </Stack>
          </GroupBody>
          <Caption><CaptionText>Diapositivas</CaptionText></Caption>
        </Group>

        <Group $w={483}>
          <GroupBody $pad="0 0 0 8px">
            <Rows>
              <Row>
                <Row $tight>
                  <Combo $w={221}>
                    <ComboSelect aria-label="Fuente"><option>Arial</option></ComboSelect><Caret />
                  </Combo>
                  <Combo $w={84}>
                    <ComboSelect aria-label="Tamaño de fuente"><option>12</option></ComboSelect><Caret />
                  </Combo>
                </Row>
                <ButtonSet $w={96}>
                  <SetButton $gap={1} aria-label="Aumentar tamaño"><Glyph $size={32}>A</Glyph><Superscript><Caret up /></Superscript></SetButton>
                  <SetButton $gap={2} aria-label="Disminuir tamaño"><Glyph $size={22}>A</Glyph><Superscript><Caret /></Superscript></SetButton>
                </ButtonSet>
                <ButtonSet $w={52}><SetButton aria-label="Borrar formato"><ClearIcon /></SetButton></ButtonSet>
              </Row>
              <Row>
                <ButtonSet $w={386}>
                  <SetButton $w={50} aria-label="Negrita"><Glyph>N</Glyph></SetButton>
                  <SetButton $w={50} aria-label="Cursiva"><Glyph $italic>K</Glyph></SetButton>
                  <SetButton $w={50} aria-label="Subrayado"><Glyph $line="underline">S</Glyph></SetButton>
                  <SetButton $w={52} aria-label="Tachado"><Glyph $line="line-through" $size={24}>abc</Glyph></SetButton>
                  <SetButton $w={50} aria-label="Sombra"><Glyph $shadow>S</Glyph></SetButton>
                  <SetButton $gap={3} aria-label="Espaciado">
                    <Stack><Glyph $size={22}>AV</Glyph><SpacingArrow /></Stack><Caret />
                  </SetButton>
                  <SetButton $gap={3} aria-label="Mayúsculas"><Glyph>Aa</Glyph><Caret /></SetButton>
                </ButtonSet>
                <ButtonSet $w={74}>
                  <SetButton $gap={12} aria-label="Color de fuente">
                    <svg width="34" height="36" viewBox="0 0 34 36">
                      <text x="6" y="24" fontFamily="Liberation Serif" fontWeight="700" fontSize="31" fill="#4a68a0">A</text>
                      <path d="M0 26h34v9H0z" fill="#05070d" />
                    </svg>
                    <Caret />
                  </SetButton>
                </ButtonSet>
              </Row>
            </Rows>
          </GroupBody>
          <Caption><CaptionText $launcher>Fuente</CaptionText><Launcher /></Caption>
        </Group>

        <Group $w={631}>
          <GroupBody $pad="0 0 0 8px" $gap={6}>
            <Rows>
              <Row>
                <ButtonSet $w={142}>
                  <SetButton $gap={12} aria-label="Viñetas"><BulletsIcon /><Caret /></SetButton>
                  <SetButton $gap={12} aria-label="Numeración"><NumbersIcon /><Caret /></SetButton>
                </ButtonSet>
                <ButtonSet $w={96}>
                  <SetButton aria-label="Disminuir sangría"><IndentIcon /></SetButton>
                  <SetButton aria-label="Aumentar sangría"><IndentIcon right /></SetButton>
                </ButtonSet>
                <ButtonSet $w={68}><SetButton $gap={4} aria-label="Interlineado"><LineSpacingIcon /><Caret /></SetButton></ButtonSet>
              </Row>
              <Row>
                <ButtonSet $w={198}>
                  <SetButton aria-label="Alinear a la izquierda"><LineIcon rows={leftRows} /></SetButton>
                  <SetButton aria-label="Centrar"><LineIcon rows={centerRows} /></SetButton>
                  <SetButton aria-label="Alinear a la derecha"><LineIcon rows={rightRows} /></SetButton>
                  <SetButton aria-label="Justificar" $active><LineIcon rows={justifyRows} /></SetButton>
                </ButtonSet>
                <ButtonSet $w={68}><SetButton aria-label="Columnas"><LineIcon rows={columnRows} /><Caret /></SetButton></ButtonSet>
              </Row>
            </Rows>
            <GroupBody $pad="4px 0 0 0">
              <Stack>
                <SmallButton><DirectionIcon />Dirección del texto <Caret /></SmallButton>
                <SmallButton><AlignTextIcon />Alinear texto <Caret /></SmallButton>
                <SmallButton><SmartArtIcon />Convertir a SmartArt <Caret /></SmallButton>
              </Stack>
            </GroupBody>
          </GroupBody>
          <Caption><CaptionText $launcher>Párrafo</CaptionText><Launcher /></Caption>
        </Group>

        <Group $w={786}>
          <GroupBody $pad="4px 0 0 9px" $gap={12}>
            <Gallery>
              <ShapeGrid>
                {shapePaths.map((s) => (
                  <IconButton key={s.name} aria-label={s.name}>
                    <svg width="34" height="34" viewBox="0 0 34 34" fill="none" stroke="#4a586c" strokeWidth="2">{s.node}</svg>
                  </IconButton>
                ))}
              </ShapeGrid>
              <Scroller>
                <ScrollButton $off aria-label="Fila anterior"><Caret up dim /></ScrollButton>
                <ScrollButton aria-label="Fila siguiente"><Caret /></ScrollButton>
                <ScrollButton aria-label="Más formas">
                  <svg width="14" height="13" viewBox="0 0 14 13" fill="#5c6c8a"><path d="M0 0h14v2H0zM1 7h12l-6 6z" /></svg>
                </ScrollButton>
              </Scroller>
            </Gallery>
            <BigButton $w={110}>
              <BigIcon><ArrangeIcon /></BigIcon>
              <BigLabel>Organizar</BigLabel>
              <BigLabel><Caret /></BigLabel>
            </BigButton>
          </GroupBody>
          <Caption><CaptionText>Dibujo</CaptionText></Caption>
        </Group>
      </Ribbon>

      <Work>
        <SidePane>
          <PaneTabs>
            <PaneTab $w={188} $front aria-label="Diapositivas">
              <svg width="24" height="22" viewBox="0 0 24 22"><path d="M1 1h21v19H1z" fill="#fdfdfd" stroke="#8c96a4" strokeWidth="2" /><path d="M6 6h11" stroke="#555f6c" strokeWidth="2" /></svg>
            </PaneTab>
            <PaneTab $w={188} aria-label="Esquema">
              <svg width="24" height="22" viewBox="0 0 24 22" stroke="#6f7c90" strokeWidth="2"><path d="M0 2h24M8 7h16M8 11h16M8 15h16M6 20h18" /></svg>
            </PaneTab>
            <PaneClose aria-label="Cerrar panel">
              <svg width="16" height="14" viewBox="0 0 16 14" stroke="#3c639c" strokeWidth="4"><path d="M2 1l12 12M14 1L2 13" /></svg>
            </PaneClose>
          </PaneTabs>
          <ThumbList>
            <Thumb>
              <ThumbNumber>1</ThumbNumber>
              <ThumbSlide><ThumbShape><ThumbText /></ThumbShape></ThumbSlide>
            </Thumb>
          </ThumbList>
        </SidePane>

        <Editor>
          <Canvas>
            <Swoosh width="660" height="130" viewBox="0 0 660 130">
              <path d="M0 0H660Q540 8 424 29 200 70 0 128z" fill="#c6daf3" fillOpacity="0.600" />
            </Swoosh>
            <Slide>
              <TextShape>
                <ShapeTitle>INTRODUCCION</ShapeTitle>
                <Paragraph>
                  <Line>Es importante destacar la importancia de la Informática en la actualidad para desarrollar los difer</Line>
                  <Line>dirigidos a los niños y niñas que&nbsp; les permita adaptarse a los nuevos modelos educativos, que día</Line>
                  <Line>fortaleciendo reglamentados por la ley . De la misma forma, los contenidos se adecuan y contex</Line>
                  <Line $inset={24}>que el estudiante logre sus competencias desarrolladas conforme al proceso</Line>
                </Paragraph>
                <Paragraph>
                  <Line>Igualmente la educación ética actualmente requiere de una readecuación de los valores, en las qu</Line>
                  <Line>juegan un papel importante . Se hace preciso destacar la falencia de muchas virtudes morales qu</Line>
                  <Line>aún parece ignorar, en muchos casos por la ausencia de normas , el índice de violencia intrafamili</Line>
                  <Line>infantil, la pederastia, el desempleo, etc. En fin una inmensidad&nbsp; de factores que rodean el mundo</Line>
                  <Line $inset={39}>por&nbsp; otro lado la tecnología ha invadido como consecuencia de la</Line>
                </Paragraph>
                <Paragraph>
                  <Line>Por estas razones, he planteado la necesidad de orientar los valores morales por medio de la Info</Line>
                  <Line>es la herramienta ideal&nbsp; que nos permite dirigirnos a la juventud que permanentemente mantiene c</Line>
                  <Line>las redes sociales y el uso de la Internet sea un apoyo positivo en el que el uso de algunos port</Line>
                  <Line>Web&nbsp; y otros medios sean utilizados de manera <Red>RESPONSABLE</Red> , cuya <Red>AUTONOMÍA</Red> sea orier</Line>
                  <Line>adecuado de&nbsp; los recursos que la Tecnología le ofrece. Emprender esta labor es responsabilida</Line>
                  <Line>cada uno de los docentes que estamos padeciendo dicha problemática, si trabajamos en&nbsp;&nbsp; equ</Line>
                  <Line $last>fomentando también la <Red>SOLIDARIDAD&nbsp; e</Red>tre</Line>
                </Paragraph>
                <Stem />
                <Handle $x="50%" $y="-52px" $round $green />
                <Handle $x="0" $y="0" $round />
                <Handle $x="50%" $y="0" />
                <Handle $x="0" $y="50%" />
                <Handle $x="0" $y="100%" $round />
                <Handle $x="50%" $y="100%" />
              </TextShape>
            </Slide>
          </Canvas>
          <Notes aria-label="Notas" placeholder="Haga clic para agregar notas" />
        </Editor>
      </Work>
    </Window>
  );
}
